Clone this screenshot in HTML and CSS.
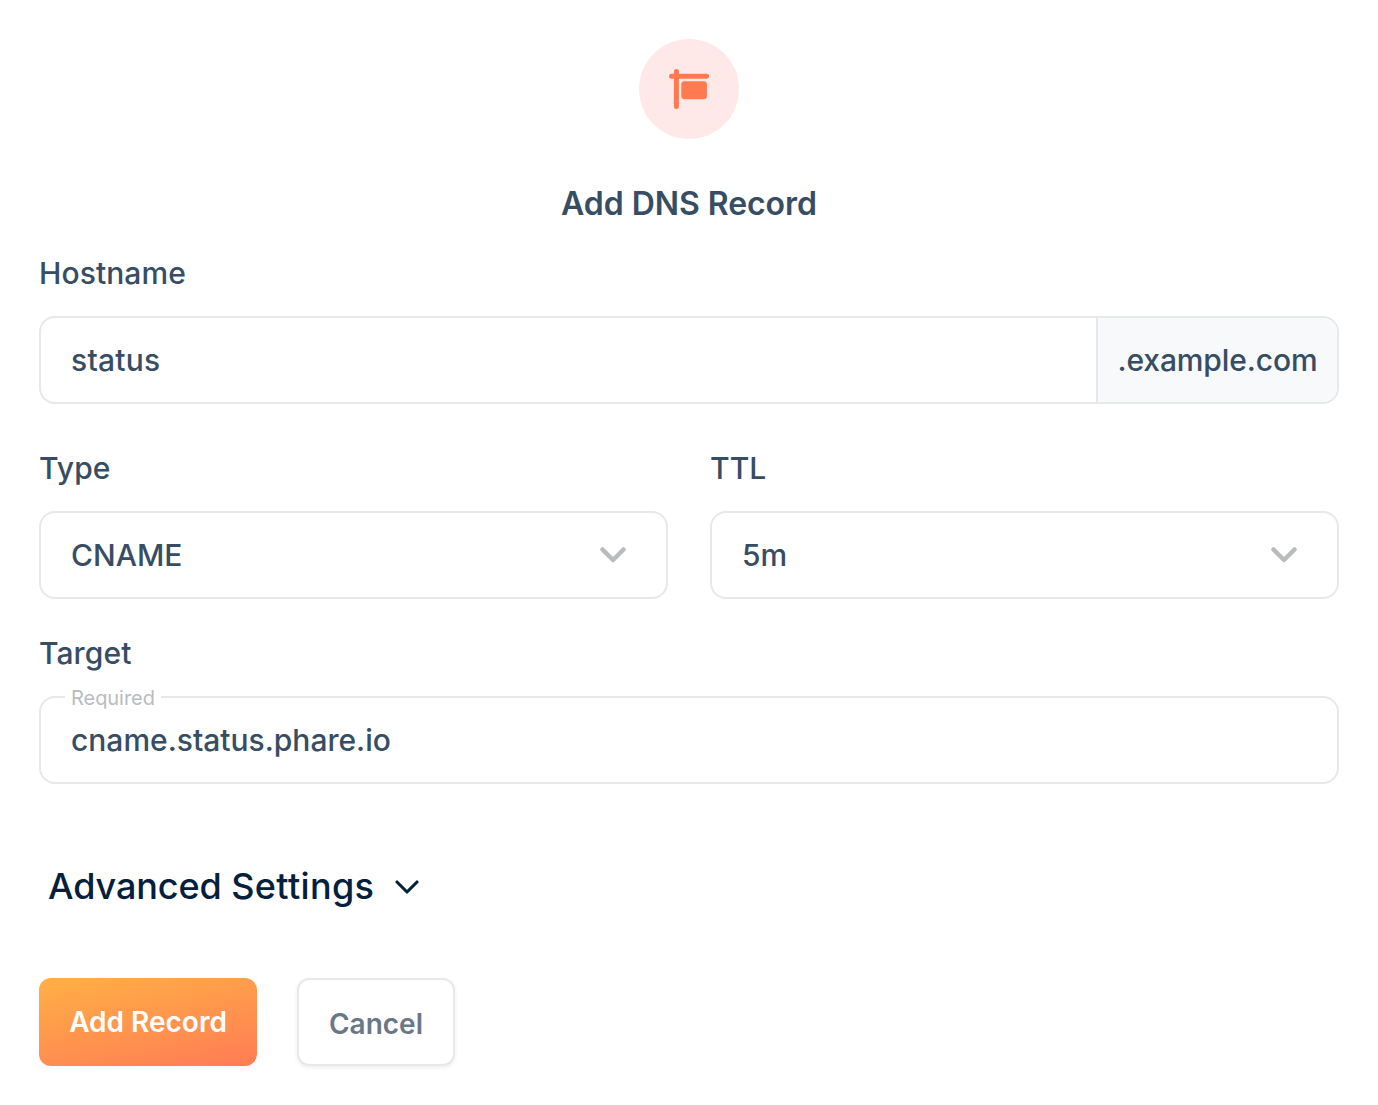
FILE: index.html
```html
<!DOCTYPE html>
<html lang="en">
<head>
<meta charset="utf-8">
<title>Add DNS Record</title>
<link rel="stylesheet" href="styles.css">
</head>
<body>
<form class="dialog">
  <div class="badge">
    <svg class="sign-icon" viewBox="0 0 40 40"><path d="M7.4 2.5V37.5M2.5 7.2H37.6" fill="none" stroke="#ff7a50" stroke-width="5" stroke-linecap="round"/><rect x="12.3" y="12.3" width="25.6" height="18" rx="3.2" fill="#ff7a50"/></svg>
  </div>
  <h1 class="title">Add DNS Record</h1>
  <div class="field hostname">
    <label class="label">Hostname</label>
    <div class="control group"><span class="value status">status</span><span class="suffix">.example.com</span></div>
  </div>
  <div class="row">
    <div class="field">
      <label class="label">Type</label>
      <div class="control select"><span class="value">CNAME</span><svg class="arrow" viewBox="0 0 26 16"><path d="M2.5 2.5L13 13L23.5 2.5"/></svg></div>
    </div>
    <div class="field">
      <label class="label">TTL</label>
      <div class="control select"><span class="value">5m</span><svg class="arrow" viewBox="0 0 26 16"><path d="M2.5 2.5L13 13L23.5 2.5"/></svg></div>
    </div>
  </div>
  <div class="field target">
    <label class="label">Target</label>
    <div class="control"><span class="hint">Required</span><span class="value">cname.status.phare.io</span></div>
  </div>
  <div class="advanced"><span class="advanced-text">Advanced <span class="settings">Settings</span></span><svg class="advanced-arrow" viewBox="0 0 24 14"><path d="M2 2L12 12L22 2"/></svg></div>
  <div class="actions">
    <button class="button primary" type="button"><span class="button-text">Add Record</span></button>
    <button class="button secondary" type="button"><span class="button-text">Cancel</span></button>
  </div>
</form>
</body>
</html>
```
FILE: styles.css
```css
* { box-sizing: border-box; }
body { margin: 0; background: #fff; color: #364d63; font-family: Inter, sans-serif; font-weight: 500; }
.dialog { padding: 39px 39px 0; height: 1105px; }
.badge { width: 100px; height: 100px; margin: 0 auto; border-radius: 50%; background: #ffe9e8; display: flex; align-items: center; justify-content: center; }
.sign-icon { width: 40px; height: 40px; }
.title { margin: 45px 0 0; height: 40px; line-height: 40px; font-size: 32px; font-weight: 600; letter-spacing: -0.05px; text-align: center; }
.field { display: flex; flex-direction: column; }
.hostname { margin-top: 29px; }
.label { height: 40px; line-height: 40px; font-size: 30px; font-weight: 450; letter-spacing: 0.1px; margin-bottom: 23px; }
.control { position: relative; height: 88px; border: 2px solid #e7e8e9; border-radius: 16px; display: flex; align-items: center; padding-left: 30px; font-size: 30px; }
.group { align-items: stretch; overflow: hidden; }
.group .value { flex: 1; line-height: 84px; }
.status { letter-spacing: 0.25px; }
.suffix { width: 241px; line-height: 84px; text-align: center; letter-spacing: -0.1px; border-left: 2px solid #e7e8e9; background: #f8f9fb; }
.row { display: grid; grid-template-columns: 1fr 1fr; column-gap: 42px; margin-top: 44px; }
.select { justify-content: space-between; padding-right: 40px; }
.arrow { width: 26px; height: 16px; fill: none; stroke: #b8bcbf; stroke-width: 4.5; stroke-linecap: round; stroke-linejoin: round; }
.target { margin-top: 34px; }
.hint { position: absolute; left: 24px; top: -14px; padding: 0 6px; line-height: 28px; font-size: 20px; font-weight: 400; letter-spacing: -0.05px; color: #b9bcbf; background: #fff; }
.advanced { display: flex; align-items: center; height: 50px; margin: 77px 0 0 9px; color: #04203b; font-size: 36px; }
.advanced-text { letter-spacing: -0.1px; }
.settings { letter-spacing: 0.35px; }
.advanced-arrow { width: 24px; height: 14px; margin: 2px 0 0 21px; fill: none; stroke: #04203b; stroke-width: 3.1; stroke-linecap: round; stroke-linejoin: round; }
.actions { display: flex; gap: 40px; margin-top: 67px; }
.button { height: 88px; padding: 0; border: 0; border-radius: 12px; font: 600 28px/88px Inter, sans-serif; }
.primary { width: 218px; color: #fff; background: linear-gradient(168deg, #ffb045, #ff7c55); box-shadow: 0 2px 4px #00000009; }
.secondary { width: 158px; color: #6a7787; background: #fff; border: 2px solid #e7e8e9; box-shadow: 0 2px 4px #0001; }
```
